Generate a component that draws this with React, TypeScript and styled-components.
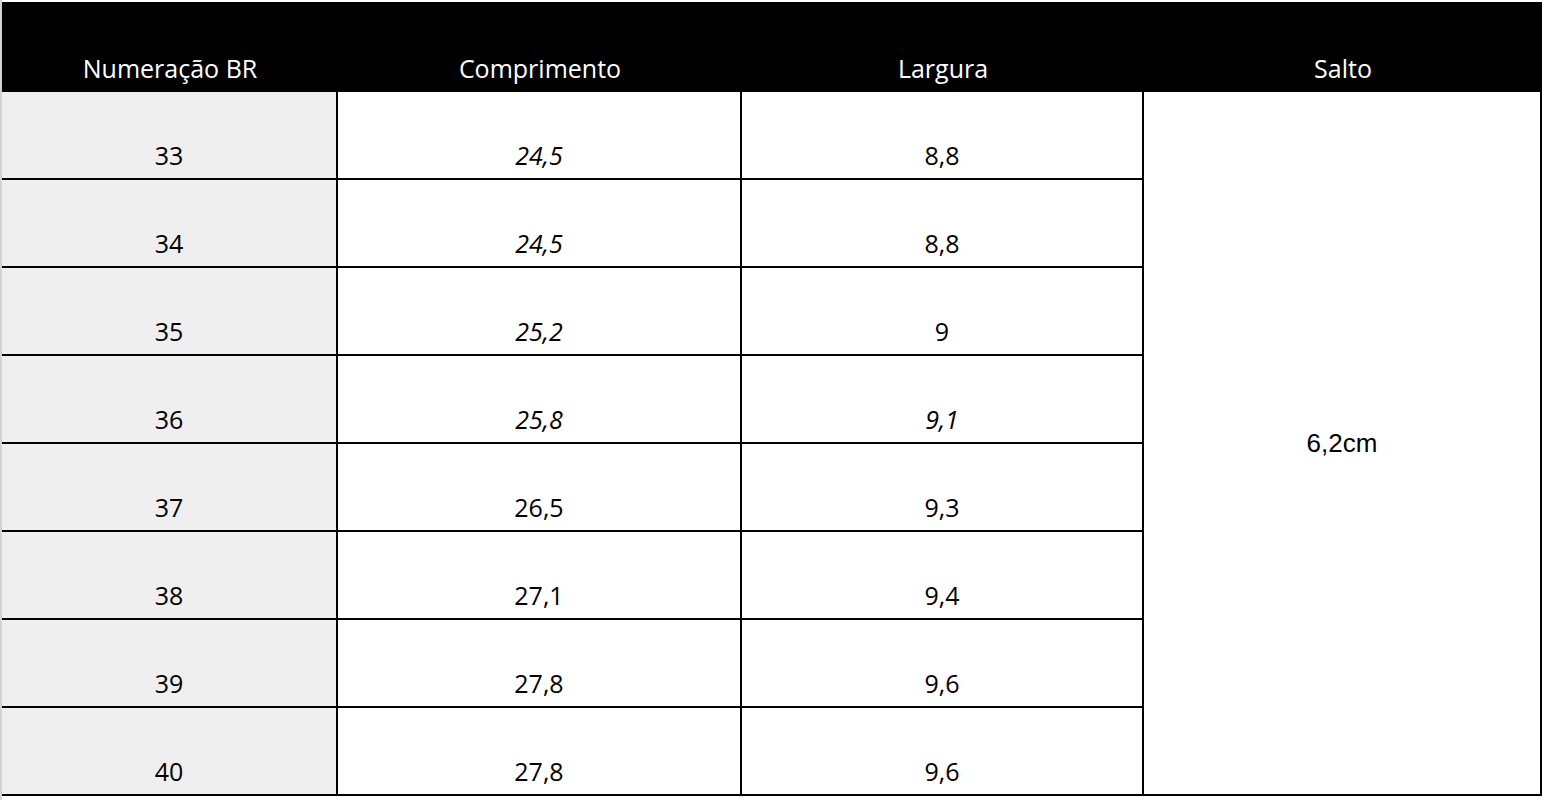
import React from "react";
import styled, { createGlobalStyle, css } from "styled-components";

const GlobalStyle = createGlobalStyle`
  html, body {
    margin: 0;
    padding: 0;
    background: #fff;
  }
  body {
    font-family: "Open Sans", "Noto Sans", sans-serif;
    color: #000;
  }
`;

const rows = [
  { size: "33", length: "24,5", width: "8,8", lengthItalic: true },
  { size: "34", length: "24,5", width: "8,8", lengthItalic: true },
  { size: "35", length: "25,2", width: "9", lengthItalic: true },
  { size: "36", length: "25,8", width: "9,1", lengthItalic: true, widthItalic: true },
  { size: "37", length: "26,5", width: "9,3" },
  { size: "38", length: "27,1", width: "9,4" },
  { size: "39", length: "27,8", width: "9,6" },
  { size: "40", length: "27,8", width: "9,6" },
];

const Sheet = styled.div`
  border-left: 2px solid #d2d4d2;
  padding-top: 2px;
  min-height: 100vh;
  box-sizing: border-box;
`;

const Grid = styled.div`
  display: grid;
  grid-template-columns: 336px 404px 402px 398px;
  grid-template-rows: 90px repeat(8, 88px);
  width: 1540px;
`;

const HeadCell = styled.div`
  background: #000;
  color: #fff;
  font-size: 25px;
  font-weight: 500;
  line-height: 1;
  display: flex;
  align-items: flex-end;
  justify-content: center;
  padding-bottom: 11px;
  box-sizing: border-box;
`;

const Cell = styled.div<{ $shade?: boolean; $italic?: boolean }>`
  box-sizing: border-box;
  border-right: 2px solid #000;
  border-bottom: 2px solid #000;
  background: ${(p) => (p.$shade ? "#efefef" : "#fff")};
  font-size: 25px;
  line-height: 1;
  display: flex;
  align-items: flex-end;
  justify-content: center;
  padding-bottom: 10px;
  ${(p) =>
    p.$italic &&
    css`
      font-style: italic;
    `}
`;

const MergedCell = styled.div`
  grid-column: 4;
  grid-row: 2 / span 8;
  box-sizing: border-box;
  border-right: 2px solid #000;
  border-bottom: 2px solid #000;
  display: flex;
  align-items: center;
  justify-content: center;
  font-family: "Liberation Sans", Arial, sans-serif;
  font-size: 26px;
`;

const App = () => {
  return (
    <>
      <GlobalStyle />
      <Sheet>
        <Grid>
          <HeadCell>Numeração BR</HeadCell>
          <HeadCell>Comprimento</HeadCell>
          <HeadCell>Largura</HeadCell>
          <HeadCell>Salto</HeadCell>
          {rows.map((row) => (
            <React.Fragment key={row.size}>
              <Cell $shade>{row.size}</Cell>
              <Cell $italic={row.lengthItalic}>{row.length}</Cell>
              <Cell $italic={row.widthItalic}>{row.width}</Cell>
            </React.Fragment>
          ))}
          <MergedCell>6,2cm</MergedCell>
        </Grid>
      </Sheet>
    </>
  );
};

export default App;
